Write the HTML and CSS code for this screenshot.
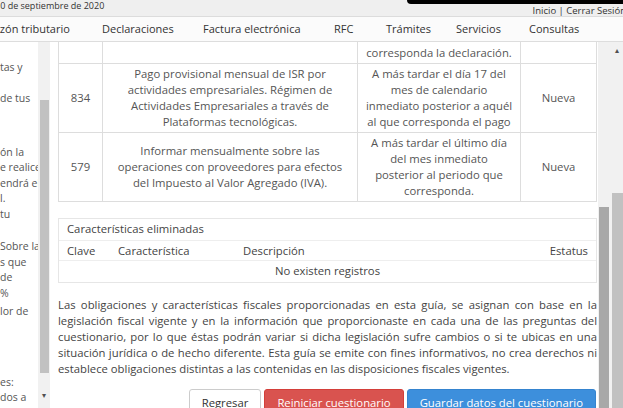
FILE: index.html
```html
<!DOCTYPE html>
<html lang="es">
<head>
    <meta charset="UTF-8">
    <meta name="viewport" content="width=device-width, initial-scale=1.0">
    <title>Guía de obligaciones</title>
    <link rel="stylesheet" href="styles.css">
</head>
<body>
    <div class="topbar">
        <span class="fecha">10 de septiembre de 2020</span>
        <span class="sesion"><a href="#">Inicio</a> | <a href="#">Cerrar Sesión</a></span>
        <div class="barra-negra"></div>
    </div>

    <nav class="menu">
        <div class="menu-items">
            <a href="#">Buzón tributario</a>
            <a href="#">Declaraciones</a>
            <a href="#">Factura electrónica</a>
            <a href="#">RFC</a>
            <a href="#">Trámites</a>
            <a href="#">Servicios</a>
            <a href="#">Consultas</a>
        </div>
    </nav>

    <div class="main">
        <!-- Panel lateral con desplazamiento -->
        <aside class="lateral">
            <div class="lateral-texto">
                <div class="bloque b1">
                    <p>tas y</p>
                    <p>&nbsp;</p>
                    <p>de tus</p>
                </div>
                <div class="bloque b2">
                    <p>ón la</p>
                    <p>e realice</p>
                    <p>endrá el</p>
                    <p>l.</p>
                    <p>tu</p>
                </div>
                <div class="bloque b3">
                    <p>Sobre la</p>
                    <p>s que</p>
                    <p>de</p>
                    <p>%</p>
                    <p class="ultima">lor de</p>
                </div>
                <div class="bloque b4">
                    <p>es:</p>
                    <p>dos a</p>
                </div>
            </div>
            <div class="scroll scroll-lateral">
                <div class="thumb"></div>
                <span class="flecha">&#9662;</span>
            </div>
        </aside>

        <section class="contenido">
            <table class="tabla">
                <colgroup>
                    <col class="c-clave">
                    <col class="c-desc">
                    <col class="c-plazo">
                    <col class="c-estatus">
                </colgroup>
                <tr class="fila-previa">
                    <td></td>
                    <td></td>
                    <td>corresponda la declaración.</td>
                    <td></td>
                </tr>
                <tr>
                    <td>834</td>
                    <td>Pago provisional mensual de ISR por actividades empresariales. Régimen de Actividades Empresariales a través de Plataformas tecnológicas.</td>
                    <td class="plazo">A más tardar el día 17 del<br>mes de calendario<br>inmediato posterior a aquél<br>al que corresponda el pago</td>
                    <td>Nueva</td>
                </tr>
                <tr>
                    <td>579</td>
                    <td>Informar mensualmente sobre las operaciones con proveedores para efectos del Impuesto al Valor Agregado (IVA).</td>
                    <td class="plazo">A más tardar el último día<br>del mes inmediato<br>posterior al periodo que<br>corresponda.</td>
                    <td>Nueva</td>
                </tr>
            </table>

            <div class="eliminadas">
                <div class="eliminadas-titulo">Características eliminadas</div>
                <div class="eliminadas-cab">
                    <span class="e-clave">Clave</span>
                    <span class="e-carac">Característica</span>
                    <span class="e-desc">Descripción</span>
                    <span class="e-estatus">Estatus</span>
                </div>
                <div class="eliminadas-vacio">No existen registros</div>
            </div>

            <p class="aviso">Las obligaciones y características fiscales proporcionadas en esta guía, se asignan con base en la legislación fiscal vigente y en la información que proporcionaste en cada una de las preguntas del cuestionario, por lo que éstas podrán variar si dicha legislación sufre cambios o si te ubicas en una situación jurídica o de hecho diferente. Esta guía se emite con fines informativos, no crea derechos ni establece obligaciones distintas a las contenidas en las disposiciones fiscales vigentes.</p>

            <div class="botones">
                <button class="btn btn-default">Regresar</button>
                <button class="btn btn-danger">Reiniciar cuestionario</button>
                <button class="btn btn-primary">Guardar datos del cuestionario</button>
            </div>
        </section>

        <div class="scroll scroll-interno">
            <div class="thumb"></div>
        </div>
        <div class="scroll scroll-externo">
            <span class="flecha">&#9652;</span>
            <div class="thumb"></div>
        </div>
    </div>
</body>
</html>
```

FILE: styles.css
```css
* {
    margin: 0;
    padding: 0;
    box-sizing: border-box;
}

body {
    width: 623px;
    height: 408px;
    overflow: hidden;
    background: #fff;
    font-family: 'Open Sans', 'Liberation Sans', sans-serif;
    color: #555;
}

a {
    color: inherit;
    text-decoration: none;
}

/* Barra superior */
.topbar {
    position: relative;
    height: 17px;
    background: #efefef;
    border-bottom: 1px solid #dcdcdc;
    font-size: 9px;
    color: #333;
}

.fecha {
    position: absolute;
    left: -5px;
    top: 0;
    line-height: 11px;
}

.sesion {
    position: absolute;
    right: -3px;
    top: 5px;
    font-size: 9.5px;
    line-height: 12px;
}

.barra-negra {
    position: absolute;
    top: 0;
    left: 407px;
    right: 0;
    height: 4px;
    background: #000;
    border-bottom-left-radius: 4px;
}

/* Menú principal */
.menu {
    height: 25px;
    background: #fbfbfb;
    border-bottom: 1px solid #ddd;
    overflow: hidden;
}

.menu-items {
    display: grid;
    grid-template-columns: 116px 101px 131px 52px 70px 73px auto;
    margin-left: -14px;
    font-size: 11px;
    line-height: 24px;
    color: #333;
    white-space: nowrap;
}

/* Contenido */
.main {
    display: flex;
    height: 366px;
}

.lateral {
    display: flex;
    width: 50px;
    flex-shrink: 0;
}

.lateral-texto {
    width: 38px;
    overflow: hidden;
    font-size: 10.5px;
    line-height: 15.5px;
    color: #555;
    white-space: nowrap;
}

.bloque p {
    height: 15.5px;
}

.bloque p.ultima {
    margin-top: 3px;
}

.b1 { margin-top: 18px; }
.b2 { margin-top: 38px; }
.b3 { margin-top: 17px; }
.b4 { margin-top: 55px; }

.scroll {
    position: relative;
    width: 12px;
    flex-shrink: 0;
    background: #f1f1f1;
}

.scroll .thumb {
    position: absolute;
    left: 2px;
    right: 1px;
    background: #c1c1c1;
}

.scroll .flecha {
    position: absolute;
    left: 0;
    width: 100%;
    text-align: center;
    font-size: 8px;
    color: #505050;
    line-height: 8px;
}

.scroll-lateral .thumb {
    top: 58px;
    height: 273px;
}

.scroll-lateral .flecha {
    top: 349px;
}

.contenido {
    flex: 1;
    padding-left: 8px;
    padding-right: 1px;
    font-size: 11.3px;
    color: #555;
}

.tabla {
    width: 100%;
    table-layout: fixed;
    border-collapse: collapse;
    margin-top: -1px;
}

.c-clave { width: 44px; }
.c-desc { width: 255px; }
.c-plazo { width: 163px; }
.c-estatus { width: 76px; }

.tabla td {
    border: 1px solid #ddd;
    text-align: center;
    vertical-align: middle;
    line-height: 16px;
    padding: 2px 6px;
}

.tabla td.plazo {
    white-space: nowrap;
}

.fila-previa td {
    height: 22px;
    white-space: nowrap;
}

.eliminadas {
    margin-top: 16px;
    border: 1px solid #e6e6e6;
}

.eliminadas-titulo,
.eliminadas-cab,
.eliminadas-vacio {
    height: 21px;
    line-height: 20px;
    padding: 0 8px;
    color: #444;
}

.eliminadas-cab {
    display: flex;
    border-top: 1px solid #eee;
    border-bottom: 1px solid #eee;
}

.e-clave { width: 51px; }
.e-carac { width: 125px; }
.e-desc { flex: 1; }

.eliminadas-vacio {
    text-align: center;
}

.aviso {
    margin-top: 14px;
    text-align: justify;
    line-height: 16px;
    color: #444;
}

.botones {
    display: flex;
    justify-content: flex-end;
    gap: 3px;
    margin-top: 12px;
    padding-right: 1px;
}

.btn {
    font-family: inherit;
    font-size: 11.3px;
    line-height: 17px;
    padding: 4px 12px;
    border: 1px solid transparent;
    border-radius: 3px;
    cursor: pointer;
}

.btn-default {
    background: #fff;
    border-color: #ccc;
    color: #333;
}

.btn-danger {
    background: #d9534f;
    border-color: #d43f3a;
    color: #fff;
}

.btn-primary {
    background: #3d8fdc;
    border-color: #3584cf;
    color: #fff;
}

.scroll-interno .thumb {
    top: 165px;
    bottom: 0;
    left: 1px;
    background: #a8a8a8;
}

.scroll-externo {
    width: 14px;
}

.scroll-externo .thumb {
    top: 151px;
    bottom: 0;
}

.scroll-externo .flecha {
    top: 4px;
}
```
